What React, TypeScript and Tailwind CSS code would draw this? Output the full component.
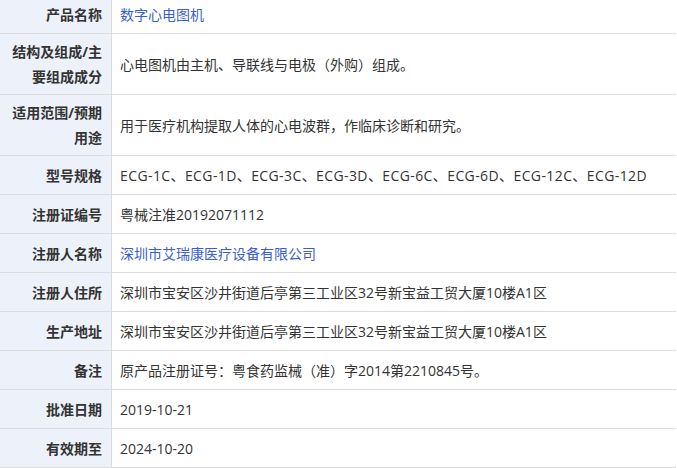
import React from "react";

type Row = { label: string; value: string; link?: boolean; tall?: boolean; wide?: boolean };

const rows: Row[] = [
  { label: "产品名称", value: "数字心电图机", link: true },
  { label: "结构及组成/主要组成成分", value: "心电图机由主机、导联线与电极（外购）组成。", tall: true },
  { label: "适用范围/预期用途", value: "用于医疗机构提取人体的心电波群，作临床诊断和研究。", tall: true },
  { label: "型号规格", value: "ECG-1C、ECG-1D、ECG-3C、ECG-3D、ECG-6C、ECG-6D、ECG-12C、ECG-12D", wide: true },
  { label: "注册证编号", value: "粤械注准20192071112" },
  { label: "注册人名称", value: "深圳市艾瑞康医疗设备有限公司", link: true },
  { label: "注册人住所", value: "深圳市宝安区沙井街道后亭第三工业区32号新宝益工贸大厦10楼A1区" },
  { label: "生产地址", value: "深圳市宝安区沙井街道后亭第三工业区32号新宝益工贸大厦10楼A1区" },
  { label: "备注", value: "原产品注册证号：粤食药监械（准）字2014第2210845号。" },
  { label: "批准日期", value: "2019-10-21" },
  { label: "有效期至", value: "2024-10-20" },
];

export default function App() {
  return (
    <div
      className="w-[677px] h-[468px] overflow-hidden bg-white text-[14px] text-[#333]"
      style={{ fontFamily: '"Open Sans", "Noto Sans CJK SC", sans-serif' }}
    >
      <div className="-mt-[5px] w-[676px]">
        {rows.map((r, i) => (
          <div
            key={i}
            className={`flex border-b border-[#dcdcdc] ${r.tall ? "h-[61px]" : "h-[39px]"}`}
          >
            <div className="w-[112px] shrink-0 bg-[#edf1fa] border-r border-[#dcdcdc] pl-[10px] pr-[9px] flex items-center justify-end text-right font-bold leading-[25px]">
              <span>{r.label}</span>
            </div>
            <div
              className={`flex-1 flex items-center pl-[8px] whitespace-nowrap ${
                r.link ? "text-[#3a5fcd]" : ""
              } ${r.wide ? "tracking-[0.4px]" : ""}`}
            >
              {r.value}
            </div>
          </div>
        ))}
      </div>
    </div>
  );
}
